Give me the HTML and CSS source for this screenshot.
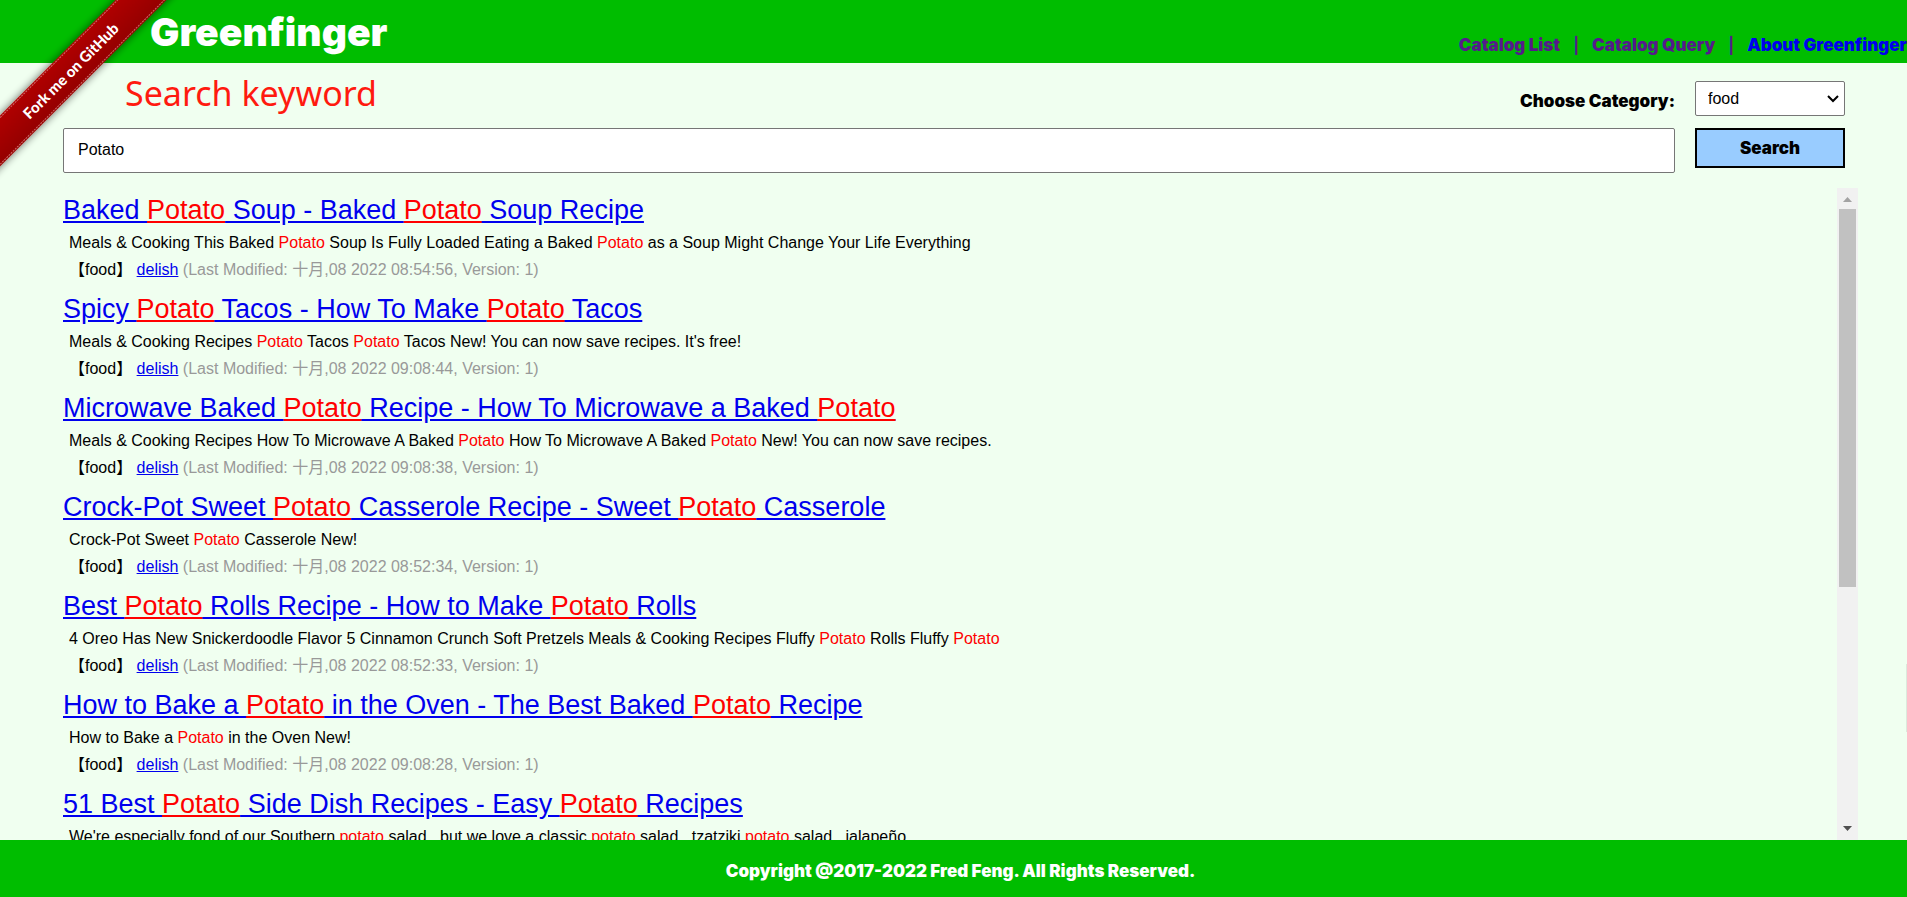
FILE: index.html
```html
<!DOCTYPE html>
<html lang="en">
<head>
<meta charset="utf-8">
<title>Greenfinger</title>
<link rel="stylesheet" href="styles.css">
</head>
<body>
<header class="header">
  <h1 class="brand">Greenfinger</h1>
  <nav class="nav">
    <a class="visited" href="#list">Catalog List</a><span class="bar">|</span><a class="visited" href="#query">Catalog Query</a><span class="bar">|</span><a href="#about">About Greenfinger</a>
  </nav>
</header>
<a class="ribbon" href="#github" aria-label="Fork me on GitHub">
  <svg width="180" height="180" viewBox="0 0 180 180">
    <defs>
      <linearGradient id="band" x1="0" y1="0" x2="0" y2="1">
        <stop offset="0" stop-color="#b00000"/>
        <stop offset="1" stop-color="#940000"/>
      </linearGradient>
      <filter id="shade" x="-10%" y="-60%" width="120%" height="220%">
        <feDropShadow dx="0" dy="0" stdDeviation="4" flood-color="#000" flood-opacity="0.6"/>
      </filter>
    </defs>
    <g transform="translate(70.5 70.5) rotate(-45)">
      <rect x="-140" y="-18" width="280" height="36" fill="url(#band)" filter="url(#shade)"/>
      <path d="M-140 -16.500H140M-140 16.500H140" stroke="#cf6a6a" stroke-width="1" stroke-dasharray="2 1"/>
      <text class="ribbon-text" x="0" y="6" text-anchor="middle">Fork me on GitHub</text>
    </g>
  </svg>
</a>
<main class="main">
  <form class="search">
    <label class="search-title" for="keyword">Search keyword</label>
    <label class="category" for="category">Choose Category:</label>
    <span class="select-box">
      <select id="category"><option>food</option></select>
      <svg class="chevron" width="12" height="8" viewBox="0 0 12 8"><path d="M1 1l5 5 5-5" fill="none" stroke="#000" stroke-width="2"/></svg>
    </span>
    <input id="keyword" type="text" value="Potato">
    <button type="button">Search</button>
  </form>
  <section class="results">
    <div class="list">
      <article><h2><a href="#1">Baked <em>Potato</em> Soup - Baked <em>Potato</em> Soup Recipe</a></h2>
        <p>Meals &amp; Cooking This Baked <em>Potato</em> Soup Is Fully Loaded Eating a Baked <em>Potato</em> as a Soup Might Change Your Life Everything</p>
        <p>【food】 <a href="#d">delish</a> <span class="meta">(Last Modified: 十月,08 2022 08:54:56, Version: 1)</span></p></article>
      <article><h2><a href="#2">Spicy <em>Potato</em> Tacos - How To Make <em>Potato</em> Tacos</a></h2>
        <p>Meals &amp; Cooking Recipes <em>Potato</em> Tacos <em>Potato</em> Tacos New! You can now save recipes. It's free!</p>
        <p>【food】 <a href="#d">delish</a> <span class="meta">(Last Modified: 十月,08 2022 09:08:44, Version: 1)</span></p></article>
      <article><h2><a href="#3">Microwave Baked <em>Potato</em> Recipe - How To Microwave a Baked <em>Potato</em></a></h2>
        <p>Meals &amp; Cooking Recipes How To Microwave A Baked <em>Potato</em> How To Microwave A Baked <em>Potato</em> New! You can now save recipes.</p>
        <p>【food】 <a href="#d">delish</a> <span class="meta">(Last Modified: 十月,08 2022 09:08:38, Version: 1)</span></p></article>
      <article><h2><a href="#4">Crock-Pot Sweet <em>Potato</em> Casserole Recipe - Sweet <em>Potato</em> Casserole</a></h2>
        <p>Crock-Pot Sweet <em>Potato</em> Casserole New!</p>
        <p>【food】 <a href="#d">delish</a> <span class="meta">(Last Modified: 十月,08 2022 08:52:34, Version: 1)</span></p></article>
      <article><h2><a href="#5">Best <em>Potato</em> Rolls Recipe - How to Make <em>Potato</em> Rolls</a></h2>
        <p>4 Oreo Has New Snickerdoodle Flavor 5 Cinnamon Crunch Soft Pretzels Meals &amp; Cooking Recipes Fluffy <em>Potato</em> Rolls Fluffy <em>Potato</em></p>
        <p>【food】 <a href="#d">delish</a> <span class="meta">(Last Modified: 十月,08 2022 08:52:33, Version: 1)</span></p></article>
      <article><h2><a href="#6">How to Bake a <em>Potato</em> in the Oven - The Best Baked <em>Potato</em> Recipe</a></h2>
        <p>How to Bake a <em>Potato</em> in the Oven New!</p>
        <p>【food】 <a href="#d">delish</a> <span class="meta">(Last Modified: 十月,08 2022 09:08:28, Version: 1)</span></p></article>
      <article><h2><a href="#7">51 Best <em>Potato</em> Side Dish Recipes - Easy <em>Potato</em> Recipes</a></h2>
        <p>We're especially fond of our Southern <em>potato</em> salad , but we love a classic <em>potato</em> salad , tzatziki <em>potato</em> salad , jalapeño</p></article>
    </div>
    <div class="scrollbar">
      <svg width="9" height="5" viewBox="0 0 9 5"><path d="M0 5L4.500 0L9 5z" fill="#a3a3a3"/></svg>
      <div class="track"><div class="thumb"></div></div>
      <svg width="9" height="5" viewBox="0 0 9 5"><path d="M0 0L4.500 5L9 0z" fill="#505050"/></svg>
    </div>
  </section>
</main>
<div class="edge-tab"></div>
<footer class="footer">Copyright @2017-2022 Fred Feng. All Rights Reserved.</footer>
</body>
</html>
```
FILE: styles.css
```css
* { box-sizing: border-box; }
body {
  margin: 0;
  height: 100vh;
  display: flex;
  flex-direction: column;
  overflow: hidden;
  background: #f0fff0;
  color: #000;
  font: 16px/27px "Liberation Sans", "Noto Sans CJK SC", sans-serif;
}
a { color: #00e; }
em { color: #f00; font-style: normal; }
.header, .footer, .category, button { font-family: Inter, sans-serif; font-size: 17px; font-weight: 900; }
.header {
  height: 63px;
  flex: none;
  display: flex;
  justify-content: space-between;
  align-items: center;
  padding-left: 150px;
  background: #00bd00;
}
.brand { margin: 0; font-size: 39px; font-weight: 900; line-height: 63px; color: #fff; }
.nav { align-self: flex-end; padding-bottom: 4px; white-space: nowrap; color: #551a8b; }
.nav a { text-decoration: none; }
.nav .visited { color: #551a8b; }
.bar { margin: 0 13px; font-size: 16px; font-weight: 700; }
.ribbon { position: absolute; top: 0; left: 0; width: 180px; height: 180px; pointer-events: none; }
.ribbon svg { display: block; }
.ribbon-text { font: 900 15px Lato, sans-serif; fill: #fff; }
.main { flex: 1; min-height: 0; display: flex; flex-direction: column; padding-left: 63px; }
.search {
  display: grid;
  grid-template-columns: 1fr auto 150px;
  grid-template-rows: 65px 60px;
  column-gap: 20px;
  padding-right: 62px;
}
.search-title { padding: 3px 0 0 62px; font: 34px/54px "Noto Sans", sans-serif; color: #ff1a0f; }
.category { padding-top: 25px; }
.select-box { position: relative; height: 35px; margin-top: 18px; }
select, input {
  width: 100%;
  border: 1px solid #767676;
  border-radius: 2px;
  background: #fff;
  color: #000;
  font: 16px "Liberation Sans", sans-serif;
}
select { height: 35px; padding: 0 12px; appearance: none; }
.chevron { position: absolute; right: 6px; top: 14px; }
input { grid-column: 1 / 3; height: 45px; padding: 0 14px 2px; }
button { height: 40px; border: 2px solid #000; background: #99ccff; color: #000; }
.results { flex: 1; min-height: 0; display: flex; padding-right: 49px; }
.list { flex: 1; min-width: 0; overflow: hidden; }
article { margin-bottom: 4px; }
h2 { margin: 0; padding-top: 4px; font-size: 27px; line-height: 37px; font-weight: normal; }
h2 a, h2 em { text-decoration: underline; }
p { margin: 0; padding-left: 6px; }
.meta { color: #999; }
.scrollbar {
  flex: none;
  width: 21px;
  display: flex;
  flex-direction: column;
  align-items: center;
  gap: 7px;
  padding: 9px 0;
  background: #f1f1f1;
}
.track { flex: 1; width: 17px; }
.thumb { height: 62%; background: #c1c1c1; }
.edge-tab { position: absolute; right: 0; top: 664px; width: 1px; height: 68px; background: #dce9dc; }
.footer { height: 57px; flex: none; padding-left: 14px; background: #00bd00; color: #fff; text-align: center; line-height: 62px; }
```
